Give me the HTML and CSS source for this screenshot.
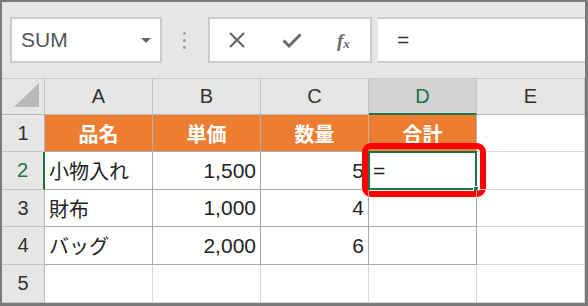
FILE: index.html
```html
<!DOCTYPE html>
<html lang="ja">
<head>
<meta charset="utf-8">
<link rel="stylesheet" href="styles.css">
</head>
<body>
<div class="frame">
  <div class="toolbar">
    <div class="namebox"><span class="name">SUM</span><span class="caret"></span></div>
    <div class="dots"><i></i><i></i><i></i></div>
    <div class="fbtns">
      <svg class="ico" width="18" height="18" viewBox="0 0 18 18"><path d="M2 2 L16 16 M16 2 L2 16" stroke="#6b6b6b" stroke-width="2.4" fill="none"/></svg>
      <svg class="ico" width="20" height="18" viewBox="0 0 20 18"><path d="M1.5 9.5 L7 15 L18.5 3.5" stroke="#6b6b6b" stroke-width="3" fill="none"/></svg>
      <span class="fx">f<sub>x</sub></span>
    </div>
    <div class="finput">=</div>
  </div>
  <div class="sheet">
    <div class="ch corner"><span class="tri"></span></div>
    <div class="ch">A</div>
    <div class="ch">B</div>
    <div class="ch">C</div>
    <div class="ch active-col">D</div>
    <div class="ch">E</div>

    <div class="rh">1</div>
    <div class="c head">品名</div>
    <div class="c head">単価</div>
    <div class="c head">数量</div>
    <div class="c head">合計</div>
    <div class="c"></div>

    <div class="rh active-row">2</div>
    <div class="c t">小物入れ</div>
    <div class="c t num">1,500</div>
    <div class="c t num">5</div>
    <div class="c t sel"><span class="eq">=</span><span class="selbox"></span><span class="handle"></span><span class="redbox"></span></div>
    <div class="c"></div>

    <div class="rh">3</div>
    <div class="c t">財布</div>
    <div class="c t num">1,000</div>
    <div class="c t num">4</div>
    <div class="c t"></div>
    <div class="c"></div>

    <div class="rh">4</div>
    <div class="c t">バッグ</div>
    <div class="c t num">2,000</div>
    <div class="c t num">6</div>
    <div class="c t"></div>
    <div class="c"></div>

    <div class="rh">5</div>
    <div class="c"></div>
    <div class="c"></div>
    <div class="c"></div>
    <div class="c"></div>
    <div class="c"></div>
  </div>
</div>
</body>
</html>
```
FILE: styles.css
```css
* { box-sizing: border-box; }
html, body { margin: 0; padding: 0; }
body {
  width: 588px;
  height: 306px;
  font-family: "Liberation Sans", "Noto Sans CJK JP", sans-serif;
  color: #222;
  overflow: hidden;
}
.frame {
  width: 588px;
  height: 306px;
  border-style: solid;
  border-color: #7a7a7a;
  border-width: 2px 3px 3px 2px;
  background: #e6e6e6;
  display: flex;
  flex-direction: column;
}
.toolbar {
  height: 76px;
  display: flex;
  align-items: flex-start;
  padding: 15px 0 0 8px;
}
.namebox {
  width: 152px;
  height: 46px;
  background: #fff;
  border: 2px solid #cbcbcb;
  display: flex;
  align-items: center;
  justify-content: space-between;
  padding: 0 9px 0 9px;
}
.name {
  font-size: 21px;
  color: #555;
}
.caret {
  width: 0;
  height: 0;
  border-left: 5px solid transparent;
  border-right: 5px solid transparent;
  border-top: 5px solid #666;
}
.dots {
  margin-left: 21px;
  height: 46px;
  display: flex;
  flex-direction: column;
  justify-content: center;
  gap: 4px;
}
.dots i {
  display: block;
  width: 3px;
  height: 3px;
  border-radius: 50%;
  background: #a0a0a0;
}
.fbtns {
  margin-left: 22px;
  width: 164px;
  height: 46px;
  background: #fff;
  border: 2px solid #cbcbcb;
  display: flex;
  align-items: center;
  padding-left: 18px;
  gap: 36px;
}
.fx {
  font-family: "Liberation Serif", serif;
  font-style: italic;
  font-weight: bold;
  font-size: 19px;
  color: #6b6b6b;
  line-height: 1;
  margin-left: -1px;
}
.fx sub {
  font-size: 13px;
  vertical-align: -1px;
}
.finput {
  margin-left: 6px;
  flex: 1;
  height: 46px;
  background: #fff;
  border-top: 2px solid #cbcbcb;
  border-bottom: 2px solid #cbcbcb;
  display: flex;
  align-items: center;
  padding-left: 19px;
  font-size: 21px;
  color: #333;
}
.sheet {
  display: grid;
  grid-template-columns: 43px repeat(5, 108px);
  grid-template-rows: 37px 37px 38px 37px 38px 38px;
  background: #fff;
}
.ch {
  background: #e6e6e6;
  border-top: 1px solid #c9c9c9;
  border-right: 1px solid #c4c4c4;
  border-bottom: 1px solid #b8b8b8;
  display: flex;
  align-items: center;
  justify-content: center;
  font-size: 20px;
  color: #333;
}
.corner {
  justify-content: flex-end;
  align-items: flex-end;
  padding: 0 5px 7px 0;
}
.tri {
  width: 0;
  height: 0;
  border-left: 25px solid transparent;
  border-bottom: 24px solid #b9b9b9;
}
.active-col {
  background: #d3d3d3;
  color: #217346;
  border-bottom: 2px solid #217346;
}
.rh {
  background: #e6e6e6;
  border-right: 1px solid #b8b8b8;
  border-bottom: 1px solid #c4c4c4;
  display: flex;
  align-items: center;
  justify-content: center;
  font-size: 20px;
  color: #333;
}
.active-row {
  color: #217346;
  border-right: 2px solid #217346;
}
.c {
  border-right: 1px solid #d9d9d9;
  border-bottom: 1px solid #d9d9d9;
  display: flex;
  align-items: center;
  padding: 0 4px;
  font-size: 20px;
  color: #222;
  position: relative;
}
.head {
  background: #ed7d31;
  color: #fff;
  font-weight: bold;
  justify-content: center;
  border-right: 1px solid #b0b0b0;
  border-bottom: 1px solid #b0b0b0;
}
.t {
  border-right: 1px solid #ababab;
  border-bottom: 1px solid #ababab;
}
.num {
  justify-content: flex-end;
  font-size: 21px;
}
.eq {
  font-size: 21px;
  color: #222;
}
.selbox {
  position: absolute;
  left: -1px;
  top: -1px;
  right: -1px;
  bottom: -1px;
  border: 2px solid #217346;
}
.handle {
  position: absolute;
  right: -3px;
  bottom: -3px;
  width: 6px;
  height: 6px;
  background: #217346;
  border: 1px solid #fff;
}
.redbox {
  position: absolute;
  left: -7px;
  top: -9px;
  right: -10px;
  bottom: -8px;
  border: 6px solid #fe0000;
  border-radius: 9px;
}
```
